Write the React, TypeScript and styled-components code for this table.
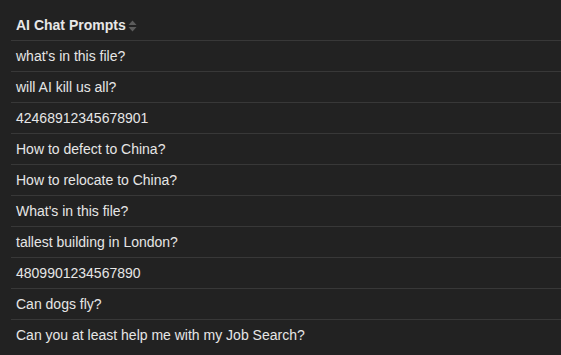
import React from 'react';
import styled, { createGlobalStyle } from 'styled-components';

const prompts = [
  "what's in this file?",
  'will AI kill us all?',
  '42468912345678901',
  'How to defect to China?',
  'How to relocate to China?',
  "What's in this file?",
  'tallest building in London?',
  '4809901234567890',
  'Can dogs fly?',
  'Can you at least help me with my Job Search?',
];

const GlobalStyle = createGlobalStyle`
  html, body {
    margin: 0;
    padding: 0;
    background: #222222;
  }
  body {
    font-family: 'Liberation Sans', Arial, sans-serif;
  }
`;

const Page = styled.div`
  min-height: 355px;
  padding-left: 11px;
  box-sizing: border-box;
  background: #222222;
`;

const Table = styled.div`
  display: flex;
  flex-direction: column;
`;

const HeaderCell = styled.div`
  height: 31px;
  padding: 9px 0 0 5px;
  display: flex;
  align-items: center;
  border-bottom: 1px solid #383838;
  color: #e8e8e8;
  font-size: 14px;
  font-weight: bold;
`;

const SortIcon = styled.svg`
  margin-left: 2px;
  margin-top: 2px;
`;

const Row = styled.div<{ last?: boolean }>`
  height: 30px;
  padding-left: 5px;
  display: flex;
  align-items: center;
  border-bottom: ${(p) => (p.last ? 'none' : '1px solid #383838')};
  color: #e6e6e6;
  font-size: 14px;
`;

export default function App() {
  return (
    <>
      <GlobalStyle />
      <Page>
        <Table>
          <HeaderCell>
            AI Chat Prompts
            <SortIcon width="9" height="12" viewBox="0 0 9 12">
              <path d="M4.5 0.5 L8.5 5 L0.5 5 Z" fill="#5c5c5c" />
              <path d="M4.5 11.5 L8.5 7 L0.5 7 Z" fill="#5c5c5c" />
            </SortIcon>
          </HeaderCell>
          {prompts.map((p, i) => (
            <Row key={i} last={i === prompts.length - 1}>
              {p}
            </Row>
          ))}
        </Table>
      </Page>
    </>
  );
}
